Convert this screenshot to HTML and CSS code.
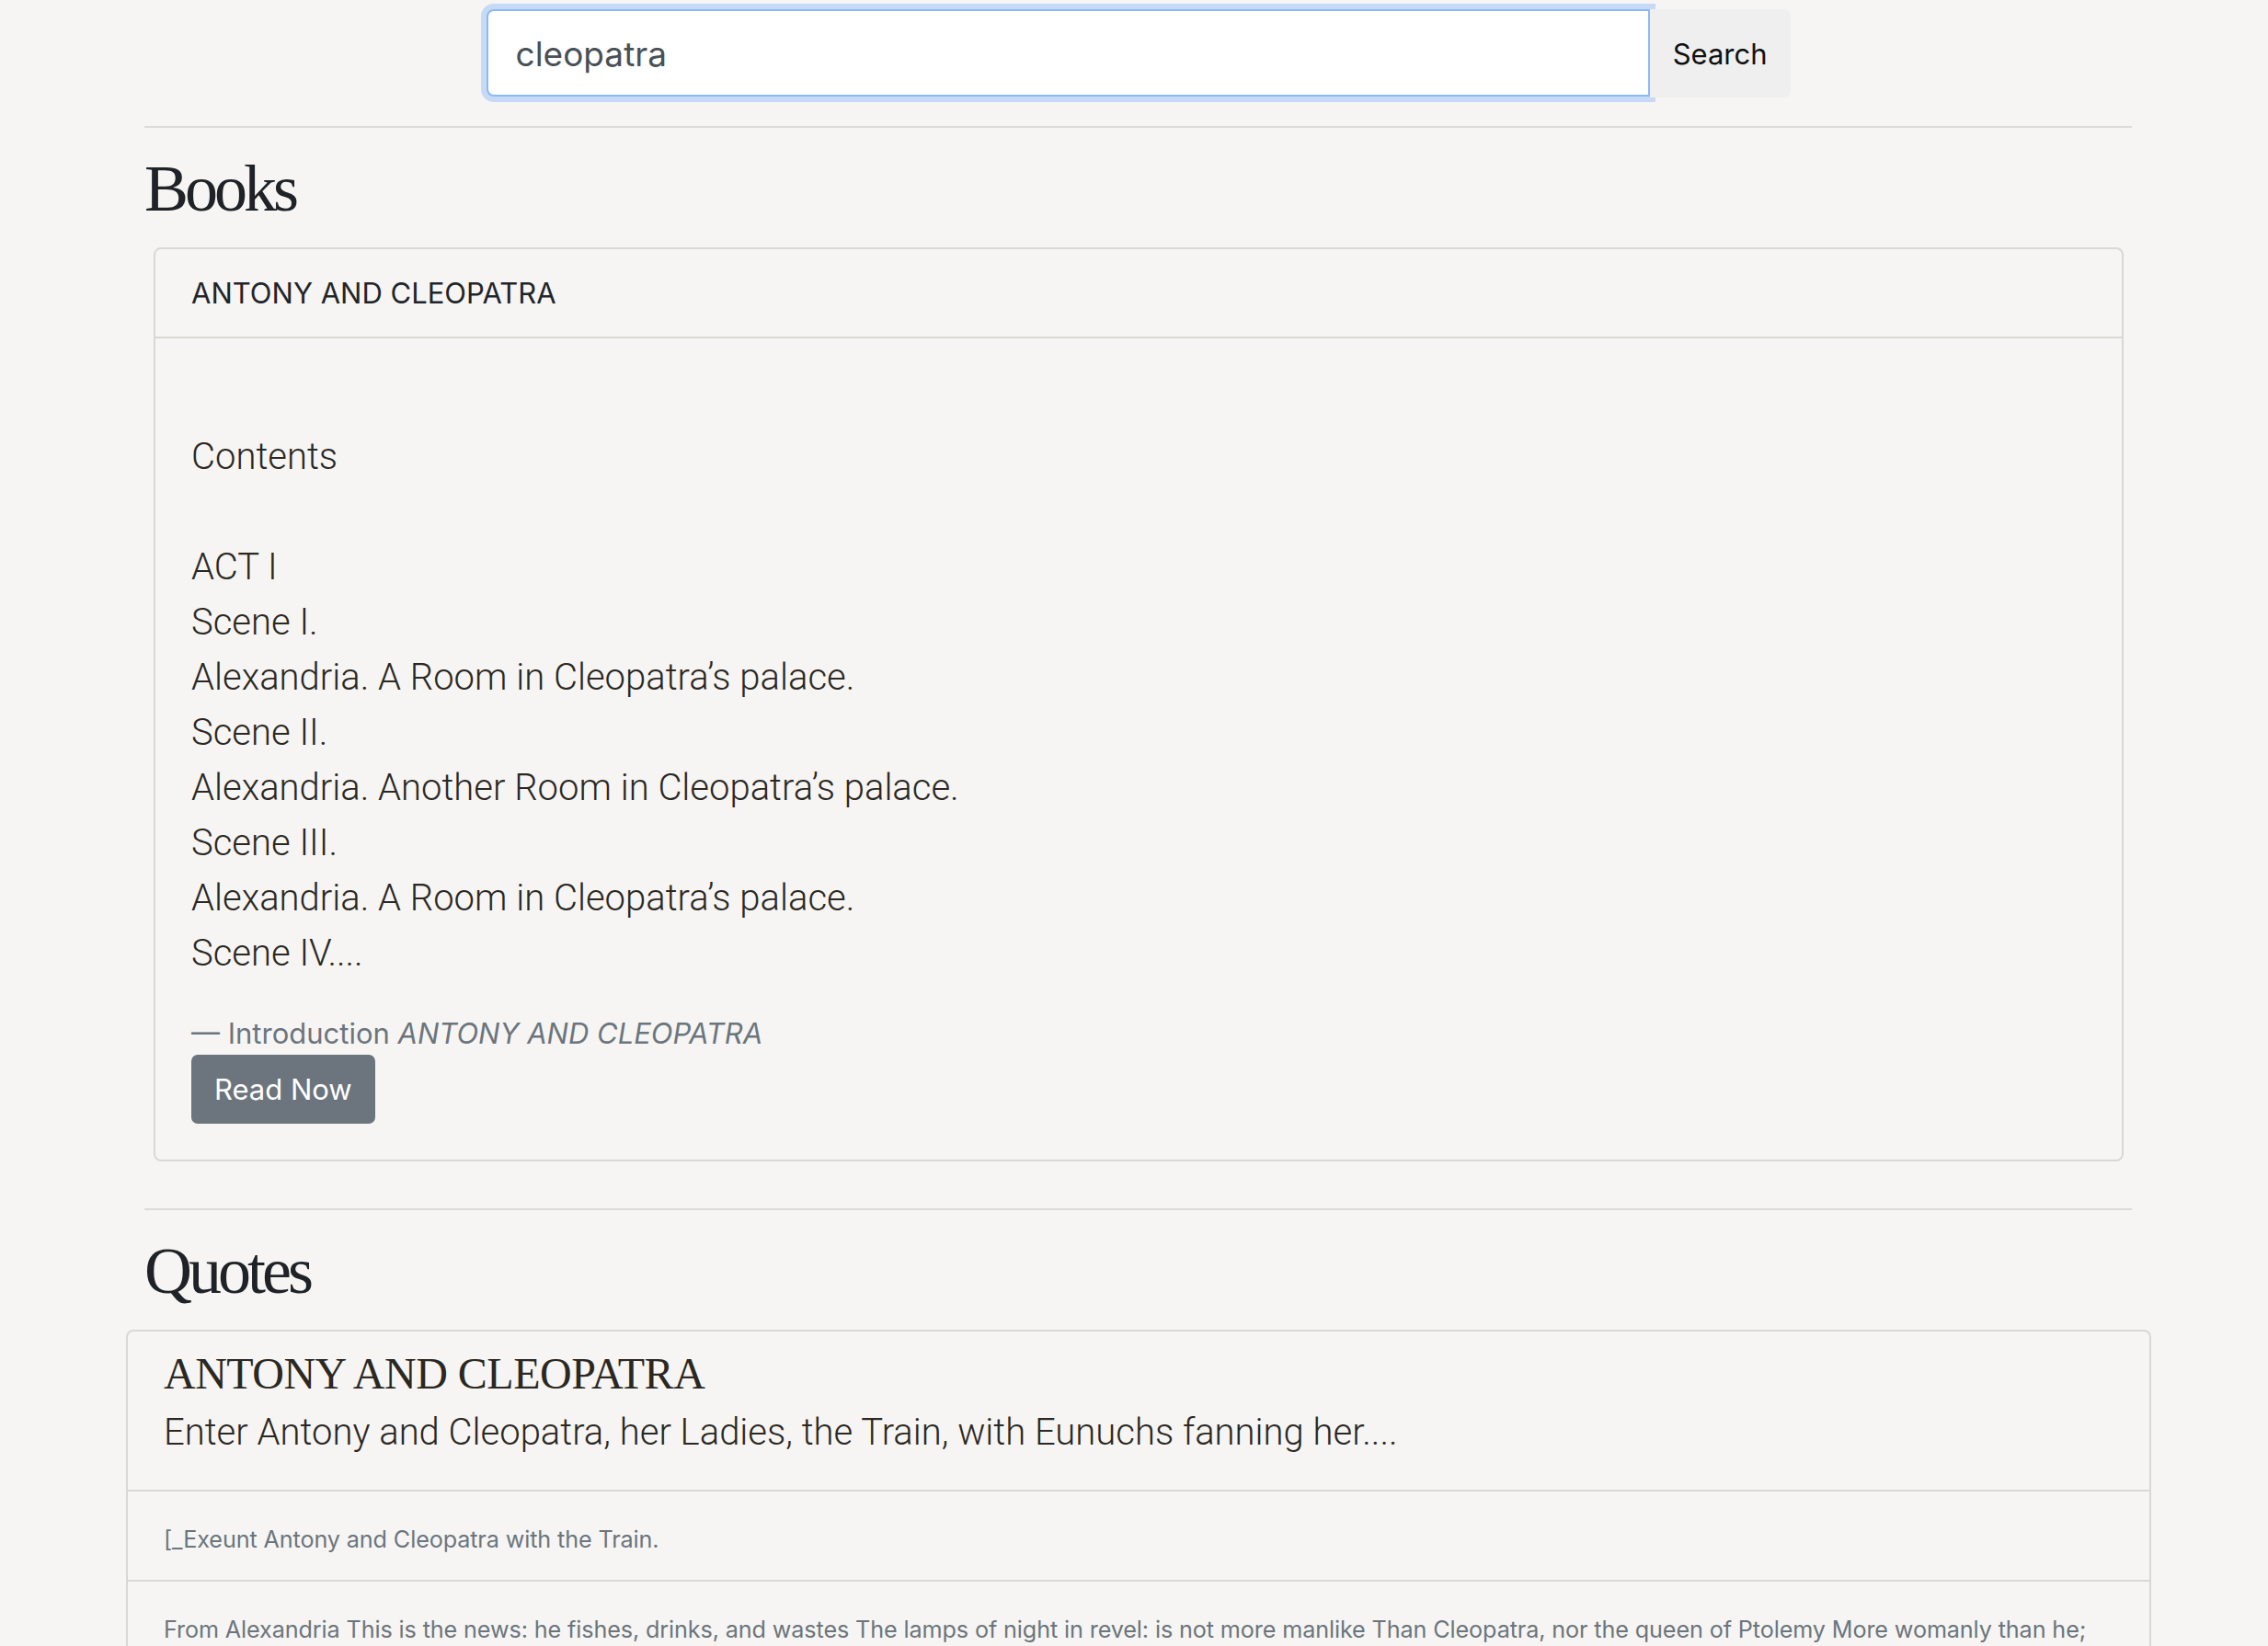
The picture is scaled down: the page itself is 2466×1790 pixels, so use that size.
FILE: index.html
```html
<!DOCTYPE html>
<html lang="en">
<head>
<meta charset="utf-8">
<title>Search results — cleopatra</title>
<link rel="stylesheet" href="styles.css">
</head>
<body>
<div class="page">
  <form class="search">
    <input class="search-input" type="text" value="cleopatra" aria-label="Search">
    <button class="search-btn" type="button">Search</button>
  </form>

  <hr class="rule">
  <h2 class="section-title">Books</h2>
  <div class="book-card">
    <div class="book-header">ANTONY AND CLEOPATRA</div>
    <div class="book-body">
      <blockquote class="excerpt">
        <p class="excerpt-text"><br>Contents<br><br>ACT I<br>Scene I.<br>Alexandria. A Room in Cleopatra’s palace.<br>Scene II.<br>Alexandria. Another Room in Cleopatra’s palace.<br>Scene III.<br>Alexandria. A Room in Cleopatra’s palace.<br>Scene IV....</p>
        <footer class="excerpt-footer">&mdash;&nbsp;Introduction <cite class="excerpt-cite">ANTONY AND CLEOPATRA</cite></footer>
      </blockquote>
      <a class="btn-read" href="#">Read Now</a>
    </div>
  </div>

  <hr class="rule rule-after-card">
  <h2 class="section-title">Quotes</h2>
  <div class="quote-card">
    <div class="quote-body">
      <h5 class="quote-title">ANTONY AND CLEOPATRA</h5>
      <p class="quote-text">Enter Antony and Cleopatra, her Ladies, the Train, with Eunuchs fanning her....</p>
    </div>
    <ul class="quote-list">
      <li class="quote-item">[_Exeunt Antony and Cleopatra with the Train.</li>
      <li class="quote-item">From Alexandria This is the news: he fishes, drinks, and wastes The lamps of night in revel: is not more manlike Than Cleopatra, nor the queen of Ptolemy More womanly than he;</li>
      <li class="quote-item">Let’s grant it is not Amiss to tumble on the bed of Ptolemy;</li>
    </ul>
  </div>
</div>
</body>
</html>
```

FILE: styles.css
```css
* {
  box-sizing: border-box;
}

html,
body {
  margin: 0;
  padding: 0;
  background: #f6f5f3;
}

body {
  font-family: Inter, "Noto Sans", "Liberation Sans", sans-serif;
  font-size: 31px;
  line-height: 1.5;
  color: #212529;
}

.page {
  width: 2161px;
  margin-left: 157px;
  padding-top: 10px;
  padding-bottom: 60px;
}

/* search */
.search {
  display: flex;
  width: 1418px;
  height: 96px;
  margin: 0 auto;
}

.search-input {
  flex: 1 1 auto;
  min-width: 0;
  height: 95px;
  margin: 0;
  padding: 2px 30px 0;
  border: 2px solid #8cb9f8;
  border-radius: 8px 0 0 8px;
  background: #fff;
  box-shadow: 0 0 0 6px rgba(13, 110, 253, 0.2);
  font-family: Inter, "Noto Sans", sans-serif;
  font-size: 37px;
  color: #495057;
  outline: none;
}

.search-btn {
  position: relative;
  z-index: 1;
  flex: 0 0 151px;
  height: 96px;
  margin: 0;
  padding: 0 25px;
  border: 0;
  border-radius: 0 8px 8px 0;
  background: #efefef;
  font-family: Inter, "Noto Sans", sans-serif;
  font-size: 31px;
  color: #111;
}

/* rules and headings */
.rule {
  height: 0;
  margin: 31px 0 0;
  border: 0;
  border-top: 2px solid #dddbd8;
}

.rule-after-card {
  margin-top: 51px;
}

.section-title {
  margin: 26px 0 24px;
  font-family: "Liberation Serif", "DejaVu Serif", serif;
  font-weight: 400;
  font-size: 72px;
  line-height: 80px;
  letter-spacing: -4px;
  color: #1f2226;
}

/* book card */
.book-card {
  margin: 0 9px 0 10px;
  border: 2px solid #dad8d4;
  border-radius: 8px;
}

.book-header {
  padding: 24px 39px;
  line-height: 47px;
  font-size: 31px;
  color: #212529;
  border-bottom: 2px solid #dad8d4;
}

.book-body {
  padding: 39px;
}

.excerpt {
  margin: 0;
}

.excerpt-text {
  margin: 0;
  font-family: Roboto, "Noto Sans", sans-serif;
  font-weight: 300;
  font-size: 40px;
  line-height: 60px;
  color: #2b2823;
}

.excerpt-footer {
  margin-top: 33px;
  font-size: 31px;
  line-height: 47px;
  color: #6c757d;
}

.excerpt-cite {
  font-style: italic;
}

.btn-read {
  display: inline-block;
  padding: 13px 23px;
  border: 2px solid #6c757d;
  border-radius: 7px;
  background: #6c757d;
  color: #fff;
  font-size: 31px;
  line-height: 45px;
  text-decoration: none;
}

/* quote card */
.quote-card {
  margin: 0 -21px 0 -20px;
  border: 2px solid #dad8d4;
  border-radius: 8px;
}

.quote-body {
  padding: 19px 39px 32px;
}

.quote-title {
  margin: 0 0 7px;
  font-family: "Liberation Serif", "DejaVu Serif", serif;
  font-weight: 400;
  font-size: 48px;
  line-height: 54px;
  letter-spacing: -0.5px;
  color: #2b2823;
}

.quote-text {
  margin: 0;
  font-family: Roboto, "Noto Sans", sans-serif;
  font-weight: 300;
  font-size: 40px;
  line-height: 60px;
  color: #2b2823;
}

.quote-list {
  margin: 0;
  padding: 0;
  list-style: none;
}

.quote-item {
  padding: 28px 39px 20px;
  border-top: 2px solid #dad8d4;
  font-size: 25.2px;
  line-height: 48px;
  letter-spacing: -0.12px;
  color: #6c757d;
}
```
